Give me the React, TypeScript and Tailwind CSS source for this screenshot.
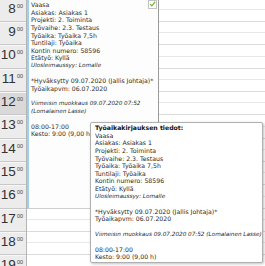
import React from "react";

const hours = [8, 9, 10, 11, 12, 13, 14, 15, 16, 17, 18, 19];

const eventLines: string[] = [
  "Vaasa",
  "Asiakas: Asiakas 1",
  "Projekti: 2. Toiminta",
  "Työvaihe: 2.3. Testaus",
  "Työaika: Työaika 7,5h",
  "Tuntilaji: Työaika",
  "Kontin numero: 58596",
  "Etätyö: Kyllä",
];

function Details({ editWrap }: { editWrap: boolean }) {
  return (
    <>
      {eventLines.map((line) => (
        <div key={line} className="whitespace-nowrap">
          {line}
        </div>
      ))}
      <div className="italic text-[5.7px] whitespace-nowrap">Ulosleimaussyy: Lomalle</div>
      <div className="h-[7.6px]" />
      <div className="whitespace-nowrap">*Hyväksytty 09.07.2020 (Jallis Johtaja)*</div>
      <div className="whitespace-nowrap">Työaikapvm: 06.07.2020</div>
      <div className="h-[7.6px]" />
      {editWrap ? (
        <div className="italic text-[5.7px] whitespace-nowrap">
          Viimeisin muokkaus 09.07.2020 07:52
          <br />
          (Lomalainen Lasse)
        </div>
      ) : (
        <div className="italic text-[5.7px] whitespace-nowrap">
          Viimeisin muokkaus 09.07.2020 07:52 (Lomalainen Lasse)
        </div>
      )}
      <div className="h-[7.6px]" />
      <div className="whitespace-nowrap">08:00-17:00</div>
      <div className="whitespace-nowrap">Kesto: 9:00 (9,00 h)</div>
    </>
  );
}

export default function App() {
  return (
    <div className="relative w-[265px] h-[266px] overflow-hidden bg-white font-['DejaVu_Sans',sans-serif]">
      <div className="flex -mt-[1.35px]">
        {/* hour labels */}
        <div className="w-[27px] shrink-0 border-r border-[#b4b4b4]">
          {hours.map((h) => (
            <div
              key={h}
              className={`h-[23.35px] flex justify-end pr-[3px] pt-[1px] border-t border-[#f7f7f7] border-b border-b-[#c8c8c8] ${
                h === 12 ? "bg-[#d9d9d9]" : "bg-[#ececec]"
              }`}
            >
              <span className="font-['Liberation_Sans',sans-serif] text-[13.5px] leading-[15px] text-[#333]">
                {h}
              </span>
              <span className="font-['Liberation_Sans',sans-serif] text-[5.5px] leading-[5px] mt-[3px] ml-[1px] text-[#444]">
                00
              </span>
            </div>
          ))}
        </div>

        {/* day column */}
        <div className="relative flex-1">
          {hours.map((h) => (
            <div key={h} className="h-[23.35px] border-b border-[#dadada]">
              <div className="h-[11.2px] border-b border-[#e8e8e8]" />
            </div>
          ))}

          <div className="absolute left-0 top-0 w-[132px] h-[210px] bg-[#fdfdfd] border-l-2 border-[#9dd0ea] border-r border-r-[#9a9a9a] border-b border-b-[#cfcfcf] pl-[2px] pt-[2.6px] text-[6.2px] leading-[7.6px] text-[#2b2b2b]">
            <Details editWrap />
            <div className="absolute right-[1px] top-[1px] w-[9px] h-[9px] border border-[#c4c4c4] bg-white flex items-center justify-center">
              <svg viewBox="0 0 10 10" className="w-[8px] h-[8px]">
                <path d="M1.5 5.2 L4 7.6 L8.8 1.8" fill="none" stroke="#72b83c" strokeWidth="1.8" />
              </svg>
            </div>
          </div>
        </div>
      </div>

      {/* tooltip */}
      <div className="absolute left-[90px] top-[122px] w-[173px] h-[141px] bg-white border border-[#b0b0b0] rounded-[2px] shadow-[1px_1px_3px_rgba(0,0,0,0.25)] pl-[4px] pt-[1.2px] text-[6.2px] leading-[7.6px] text-[#1f1f1f]">
        <div className="font-bold whitespace-nowrap text-[#111]">Työaikakirjauksen tiedot:</div>
        <Details editWrap={false} />
      </div>
    </div>
  );
}
